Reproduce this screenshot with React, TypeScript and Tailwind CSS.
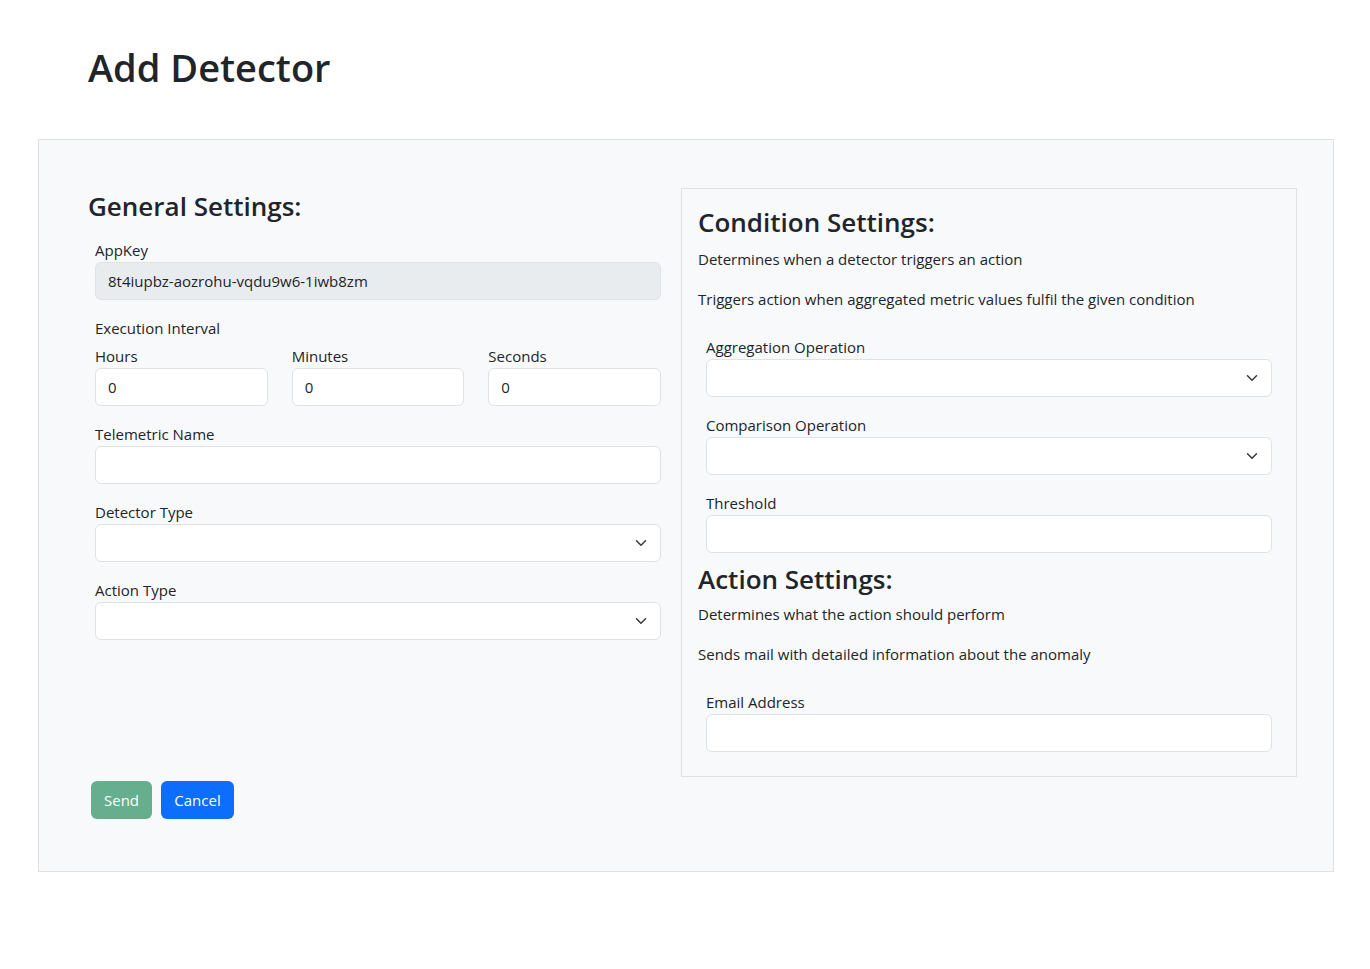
import React from "react";

const Chevron = () => (
  <svg
    className="absolute right-[12px] top-1/2 -translate-y-1/2"
    width="16"
    height="12"
    viewBox="0 0 16 16"
    fill="none"
  >
    <path
      d="m2 5 6 6 6-6"
      stroke="#343a40"
      strokeWidth="2"
      strokeLinecap="round"
      strokeLinejoin="round"
    />
  </svg>
);

const inputCls =
  "block w-full h-[38px] rounded-[6px] border border-[#dee2e6] bg-white px-3 text-[15px] text-[#212529] outline-none";

const Field = ({ label, value, select }: { label: string; value?: string; select?: boolean }) => (
  <div className="flex flex-col">
    <label className="h-6 leading-6">{label}</label>
    <div className="relative">
      <input className={inputCls} defaultValue={value ?? ""} readOnly={select} />
      {select && <Chevron />}
    </div>
  </div>
);

export default function App() {
  return (
    <div
      className="min-h-screen bg-white text-[15px] text-[#212529]"
      style={{ fontFamily: '"Open Sans", "Noto Sans", sans-serif' }}
    >
      <h1 className="pl-[88px] pt-[45px] h-[139px] text-[38px] font-semibold leading-[1.2]">Add Detector</h1>

      <div className="ml-[38px] w-[1296px] h-[733px] border border-[#dee2e6] bg-[#f8f9fa] pl-[49px] pt-[48px]">
        <div className="flex gap-5">
          {/* general settings */}
          <div className="w-[573px]">
            <h3 className="text-[26px] font-semibold leading-[34px] pt-px">General Settings:</h3>
            <div className="pl-[7px]">
              <div className="mt-[15px]">
                <label className="block h-6 leading-6">AppKey</label>
                <input
                  className="block w-full h-[38px] rounded-[6px] border border-[#dee2e6] bg-[#e9ecef] px-3 text-[15px] text-[#212529] outline-none"
                  defaultValue="8t4iupbz-aozrohu-vqdu9w6-1iwb8zm"
                  readOnly
                />
              </div>

              <div className="mt-4">
                <div className="h-6 leading-6">Execution Interval</div>
                <div className="mt-1 grid grid-cols-3 gap-x-6">
                  <Field label="Hours" value="0" />
                  <Field label="Minutes" value="0" />
                  <Field label="Seconds" value="0" />
                </div>
              </div>

              <div className="mt-4">
                <Field label="Telemetric Name" />
              </div>
              <div className="mt-4">
                <Field label="Detector Type" select />
              </div>
              <div className="mt-4">
                <Field label="Action Type" select />
              </div>
            </div>
          </div>

          {/* condition + action settings */}
          <div className="w-[616px] border border-[#dee2e6] px-4 pt-4 pb-6">
            <h3 className="text-[26px] font-semibold leading-[34px]">Condition Settings:</h3>
            <p className="mt-2 h-6 leading-6">Determines when a detector triggers an action</p>
            <p className="mt-4 h-6 leading-6">Triggers action when aggregated metric values fulfil the given condition</p>
            <div className="px-2">
              <div className="mt-6">
                <Field label="Aggregation Operation" select />
              </div>
              <div className="mt-4">
                <Field label="Comparison Operation" select />
              </div>
              <div className="mt-4">
                <Field label="Threshold" />
              </div>
            </div>
            <h3 className="mt-[9px] text-[26px] font-semibold leading-[34px]">Action Settings:</h3>
            <p className="mt-[6px] h-6 leading-6">Determines what the action should perform</p>
            <p className="mt-4 h-6 leading-6">Sends mail with detailed information about the anomaly</p>
            <div className="px-2 mt-6">
              <Field label="Email Address" />
            </div>
          </div>
        </div>

        <div className="mt-1 flex gap-[9px] pl-[3px]">
          <button className="h-[38px] w-[61px] rounded-[6px] bg-[#198754] opacity-65 text-white text-[15px]">
            Send
          </button>
          <button className="h-[38px] w-[73px] rounded-[6px] bg-[#0d6efd] text-white text-[15px]">
            Cancel
          </button>
        </div>
      </div>
    </div>
  );
}
